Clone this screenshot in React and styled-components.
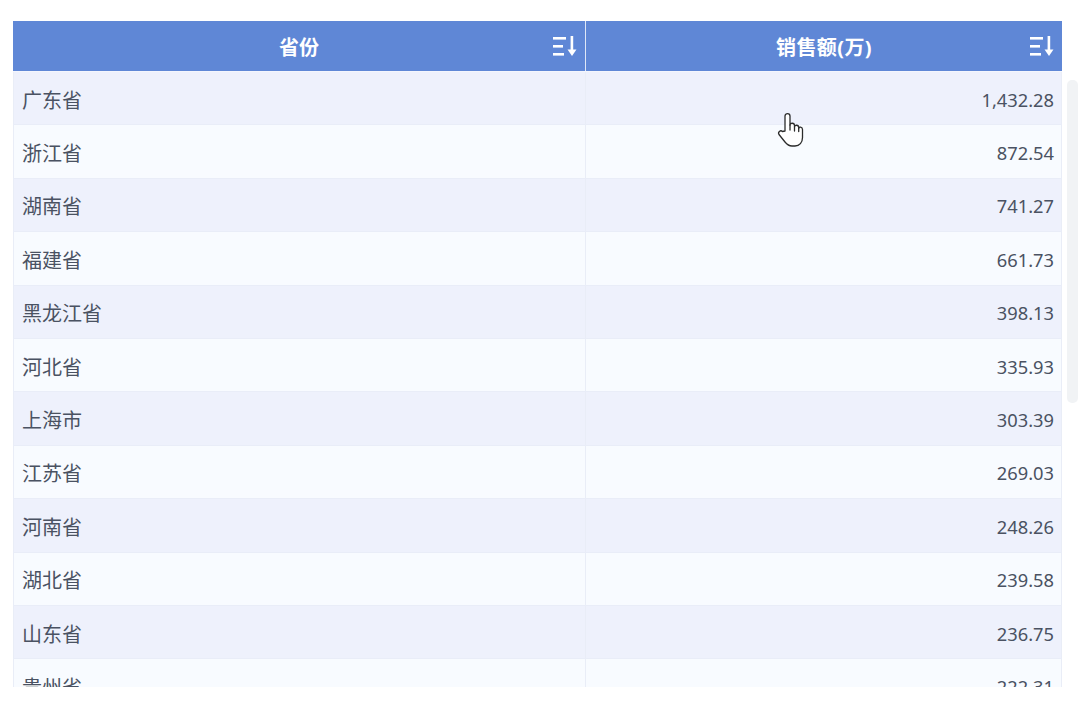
import styled, { createGlobalStyle } from "styled-components";

const rows = [
  ["广东省", "1,432.28"],
  ["浙江省", "872.54"],
  ["湖南省", "741.27"],
  ["福建省", "661.73"],
  ["黑龙江省", "398.13"],
  ["河北省", "335.93"],
  ["上海市", "303.39"],
  ["江苏省", "269.03"],
  ["河南省", "248.26"],
  ["湖北省", "239.58"],
  ["山东省", "236.75"],
  ["贵州省", "222.31"],
];

const GlobalStyle = createGlobalStyle`
  html, body {
    margin: 0;
    padding: 0;
    background: #fff;
  }
  body {
    font-family: "Noto Sans", "Noto Sans CJK SC", sans-serif;
  }
`;

const Page = styled.div`
  position: relative;
  width: 1078px;
  height: 708px;
  padding: 21px 0 0 13px;
  box-sizing: border-box;
  display: flex;
  align-items: flex-start;
  overflow: hidden;
`;

const Table = styled.div`
  width: 1049px;
  height: 666px;
  overflow: hidden;
  flex: none;
`;

const HeaderRow = styled.div`
  display: grid;
  grid-template-columns: 572px 1fr;
  height: 51px;
  box-sizing: border-box;
  background: #5f87d6;
  border-bottom: 1px solid #f4f6fd;
`;

const HeaderCell = styled.div`
  position: relative;
  display: flex;
  align-items: center;
  justify-content: center;
  color: #fff;
  font-size: 20px;
  font-weight: 700;
  letter-spacing: ${(props) => (props.$divider ? "0.4px" : "0")};
  box-sizing: border-box;
  border-left: ${(props) => (props.$divider ? "1px solid #dfe7f7" : "none")};
`;

const SortButton = styled.svg`
  position: absolute;
  right: 8px;
  top: 14px;
  width: 25px;
  height: 22px;
  color: #fff;
`;

const Row = styled.div`
  display: grid;
  grid-template-columns: 572px 1fr;
  height: 53.4px;
  box-sizing: border-box;
  background: ${(props) => (props.$odd ? "#eef1fc" : "#f8fbff")};
  border-bottom: 1px solid #e9edf8;
`;

const Cell = styled.div`
  display: flex;
  align-items: center;
  justify-content: ${(props) => (props.$right ? "flex-end" : "flex-start")};
  padding: 2px 7px 0 8px;
  color: #4a5262;
  font-size: ${(props) => (props.$right ? "18.3px" : "20px")};
  box-sizing: border-box;
  border-left: 1px solid #e9edf7;
  border-right: ${(props) => (props.$right ? "1px solid #e9edf7" : "none")};
`;

const ScrollThumb = styled.div`
  flex: none;
  width: 11px;
  height: 323px;
  margin: 59px 0 0 5px;
  border-radius: 5px;
  background: #f1f3f5;
`;

const Pointer = styled.svg`
  position: absolute;
  left: 777px;
  top: 112px;
  width: 27px;
  height: 35px;
`;

const SortIcon = () => (
  <SortButton viewBox="0 0 25 22" fill="currentColor">
    <rect x="1" y="2" width="13" height="2.6" />
    <rect x="1" y="10" width="10" height="2.6" />
    <rect x="1" y="18" width="11" height="2.6" />
    <rect x="18.6" y="1" width="2.6" height="15" />
    <path d="M15.5 14.5h9L20 21z" />
  </SortButton>
);

const App = () => {
  return (
    <Page>
      <GlobalStyle />
      <Table>
        <HeaderRow>
          <HeaderCell>
            省份
            <SortIcon />
          </HeaderCell>
          <HeaderCell $divider>
            销售额(万)
            <SortIcon />
          </HeaderCell>
        </HeaderRow>
        {rows.map(([province, sales], i) => (
          <Row key={province} $odd={i % 2 === 0}>
            <Cell>{province}</Cell>
            <Cell $right>{sales}</Cell>
          </Row>
        ))}
      </Table>
      <ScrollThumb />
      <Pointer viewBox="0 0 27 35" fill="#fff" stroke="#2b2b2b" strokeWidth="1.3" strokeLinejoin="round" strokeLinecap="round">
        <path d="M8 19V4C8 .8 13 .8 13 4v9c0-2.400 4.500-2.400 4.500.5v1.500c0-2.400 4.200-2.400 4.200.5v1c0-2.200 3.800-1.800 3.800 1v8c0 5-3 8.500-7.500 8.500h-3c-3 0-5-1.500-7-4l-6-7.500c-1.500-2.500 1.500-4.800 3.500-3z" />
        <path d="M13 13v5M17.500 15v4M21.700 16.500v3" fill="none" />
      </Pointer>
    </Page>
  );
};

export default App;
